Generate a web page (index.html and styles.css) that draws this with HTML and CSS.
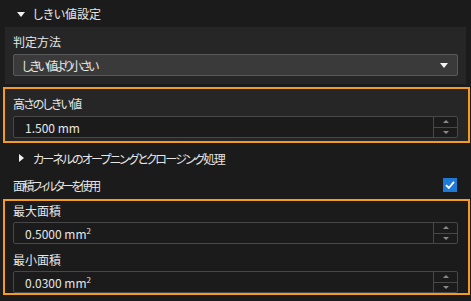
FILE: index.html
```html
<!DOCTYPE html>
<html lang="ja">
<head>
    <meta charset="UTF-8">
    <title>しきい値設定</title>
    <link rel="stylesheet" href="styles.css">
</head>
<body>
    <div class="group-header">
        <span class="tri-down"></span>
        <span>しきい値設定</span>
    </div>
    <div class="panel">
        <div class="label">判定方法</div>
        <div class="select">
            <span class="select-text">しきい値より小さい</span>
            <span class="select-arrow"></span>
        </div>
    </div>
    <div class="highlight first">
        <div class="label kana">高さのしきい値</div>
        <div class="spin">
            <span class="spin-value">1.500 mm</span>
            <span class="spin-buttons">
                <span class="spin-up"></span>
                <span class="spin-down"></span>
            </span>
        </div>
    </div>
    <div class="row sub">
        <span class="tri-right"></span>
        <span class="kernel-text">カーネルのオープニングとクロージング処理</span>
    </div>
    <div class="row check-row">
        <span class="check-text">面積フィルターを使用</span>
        <span class="checkbox">
            <svg width="14" height="14" viewBox="0 0 14 14"><path d="M3 7.2 L5.8 10 L11 3.8" fill="none" stroke="#fff" stroke-width="1.8"/></svg>
        </span>
    </div>
    <div class="highlight second">
        <div class="label">最大面積</div>
        <div class="spin">
            <span class="spin-value">0.5000 mm<sup>2</sup></span>
            <span class="spin-buttons">
                <span class="spin-up"></span>
                <span class="spin-down"></span>
            </span>
        </div>
        <div class="label">最小面積</div>
        <div class="spin">
            <span class="spin-value">0.0300 mm<sup>2</sup></span>
            <span class="spin-buttons">
                <span class="spin-up"></span>
                <span class="spin-down"></span>
            </span>
        </div>
    </div>
</body>
</html>
```
FILE: styles.css
```css
body {
    margin: 0;
    padding: 0;
    background-color: #1b1b1b;
    color: #e6e6e6;
    font-family: "Noto Sans CJK JP", "Noto Sans", sans-serif;
    font-size: 12px;
    font-feature-settings: "palt";
    width: 471px;
    height: 301px;
    overflow: hidden;
}
.group-header {
    height: 27px;
    display: flex;
    align-items: center;
    padding-left: 17px;
    gap: 8px;
}
.tri-down {
    width: 0;
    height: 0;
    border-left: 4px solid transparent;
    border-right: 4px solid transparent;
    border-top: 5px solid #f0f0f0;
    margin-top: 1px;
}
.tri-right {
    width: 0;
    height: 0;
    border-top: 4.5px solid transparent;
    border-bottom: 4.5px solid transparent;
    border-left: 5px solid #f0f0f0;
}
.panel {
    margin: 0 5px;
    background-color: #262626;
    padding: 6px 8px 8px 8px;
}
.label {
    height: 18px;
    line-height: 18px;
    margin-bottom: 3px;
}
.label.kana {
    letter-spacing: -1.5px;
}
.select {
    height: 20px;
    background-color: #3a3a3a;
    border: 1px solid #5a5a5a;
    border-radius: 2px;
    display: flex;
    align-items: center;
    justify-content: space-between;
    padding: 0 9px 0 8px;
}
.select-text {
    letter-spacing: -2.6px;
}
.select-arrow {
    width: 0;
    height: 0;
    border-left: 4px solid transparent;
    border-right: 4px solid transparent;
    border-top: 5px solid #f4f4f4;
}
.highlight {
    margin-left: 3px;
    width: 467px;
    border: 2px solid #f39c1e;
    background-color: #262626;
    padding: 0 0 0 8px;
    box-sizing: border-box;
}
.highlight.first {
    margin-top: 3px;
    padding-top: 6px;
    padding-bottom: 3px;
}
.highlight.second {
    margin-top: 1px;
    padding-top: 1px;
    background-color: #1b1b1b;
}
.highlight.second .label {
    margin-bottom: 2px;
}
.highlight.second .label + .spin {
    margin-bottom: 7px;
}
.highlight.second .spin:last-child {
    margin-bottom: 0;
}
.spin {
    height: 20px;
    width: 443px;
    background-color: #1b1b1b;
    border: 1px solid #474747;
    border-radius: 2px;
    display: flex;
    align-items: center;
    justify-content: space-between;
}
.spin-value {
    padding-left: 11px;
}
.spin-value sup {
    font-size: 8px;
    line-height: 0;
}
.spin-buttons {
    width: 23px;
    height: 20px;
    border-left: 1px solid #474747;
    display: flex;
    flex-direction: column;
}
.spin-up, .spin-down {
    flex: 1;
    position: relative;
}
.spin-up {
    border-bottom: 1px solid #474747;
}
.spin-up::after, .spin-down::after {
    content: "";
    position: absolute;
    left: 9px;
    top: 3px;
    border-left: 3px solid transparent;
    border-right: 3px solid transparent;
}
.spin-up::after {
    border-bottom: 3px solid #8a8a8a;
}
.spin-down::after {
    border-top: 3px solid #8a8a8a;
}
.row {
    display: flex;
    align-items: center;
}
.row.sub {
    height: 28px;
    padding-left: 19px;
    gap: 9px;
    margin-top: 1px;
}
.kernel-text {
    letter-spacing: -1.7px;
}
.check-row {
    height: 26px;
    padding-left: 13px;
    padding-right: 14px;
    justify-content: space-between;
}
.check-text {
    letter-spacing: -2.6px;
}
.checkbox {
    width: 14px;
    height: 14px;
    background-color: #1d7ad8;
    display: block;
}
.checkbox svg {
    display: block;
}
```
